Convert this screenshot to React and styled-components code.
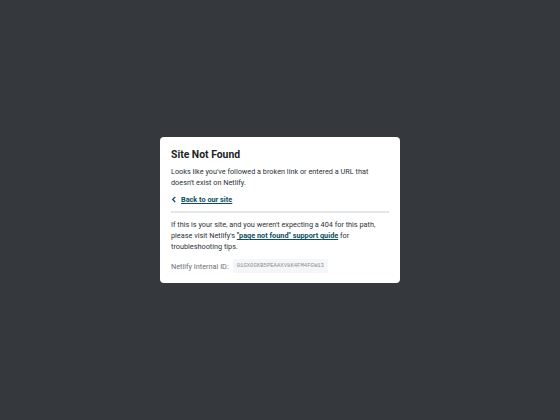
import React from 'react';
import styled, { createGlobalStyle } from 'styled-components';

const GlobalStyle = createGlobalStyle`
    html, body {
        margin: 0;
        padding: 0;
        height: 100%;
        background: #35383d;
    }
    #root {
        height: 100%;
    }
`;

const App = () => {
    return (
        <>
            <GlobalStyle />
            <Styled.Page>
                <Styled.Card>
                    <Styled.Title>Site Not Found</Styled.Title>
                    <Styled.P>
                        Looks like you've followed a broken link or entered a URL that
                        doesn't exist on Netlify.
                    </Styled.P>
                    <Styled.Back href="#">
                        <svg width="6" height="7" viewBox="0 0 6 8">
                            <path
                                d="M4.5 1 L1.5 4 L4.5 7"
                                fill="none"
                                stroke="#0e4d60"
                                strokeWidth="1.5"
                            />
                        </svg>
                        <span>Back to our site</span>
                    </Styled.Back>
                    <Styled.Divider />
                    <Styled.P>
                        If this is your site, and you weren't expecting a 404 for this path,
                        please visit Netlify's{' '}
                        <Styled.Link href="#">"page not found" support guide</Styled.Link>{' '}
                        for troubleshooting tips.
                    </Styled.P>
                    <Styled.Meta>
                        <span>Netlify Internal ID:</span>
                        <Styled.Code>01GX0GKB5PEAAXV8K4FM4FGW13</Styled.Code>
                    </Styled.Meta>
                </Styled.Card>
            </Styled.Page>
        </>
    );
};
export default App;

const Page = styled.div`
    height: 100%;
    display: flex;
    align-items: center;
    justify-content: center;
    font-family: Roboto, 'Noto Sans', sans-serif;
`;
const Card = styled.div`
    width: 240px;
    box-sizing: border-box;
    padding: 10px 11px 10px;
    background: #ffffff;
    border-radius: 4px;
    color: #2e3338;
`;
const Title = styled.h1`
    margin: 0 0 4px;
    font-size: 10.4px;
    line-height: 15px;
    font-weight: 700;
    color: #1f2328;
`;
const P = styled.p`
    margin: 0;
    font-size: 7.3px;
    line-height: 11px;
`;
const Back = styled.a`
    display: flex;
    align-items: center;
    gap: 4px;
    margin-top: 6px;
    font-size: 7.3px;
    line-height: 11px;
    font-weight: 700;
    color: #0e4d60;
    span {
        text-decoration: underline;
    }
`;
const Divider = styled.hr`
    margin: 6px 0 6px;
    border: 0;
    height: 2px;
    background: #e3e5e7;
`;
const Link = styled.a`
    color: #0e4d60;
    font-weight: 700;
    text-decoration: underline;
`;
const Meta = styled.div`
    display: flex;
    align-items: center;
    gap: 4px;
    margin-top: 7px;
    font-size: 7.3px;
    line-height: 11px;
    color: #6b6f74;
`;
const Code = styled.code`
    display: inline-block;
    padding: 3px 4px;
    line-height: 8px;
    background: #f5f6f7;
    border-radius: 2px;
    font-family: 'Liberation Mono', monospace;
    font-size: 5.6px;
    color: #8a8f94;
`;

const Styled = {
    Page,
    Card,
    Title,
    P,
    Back,
    Divider,
    Link,
    Meta,
    Code,
};
